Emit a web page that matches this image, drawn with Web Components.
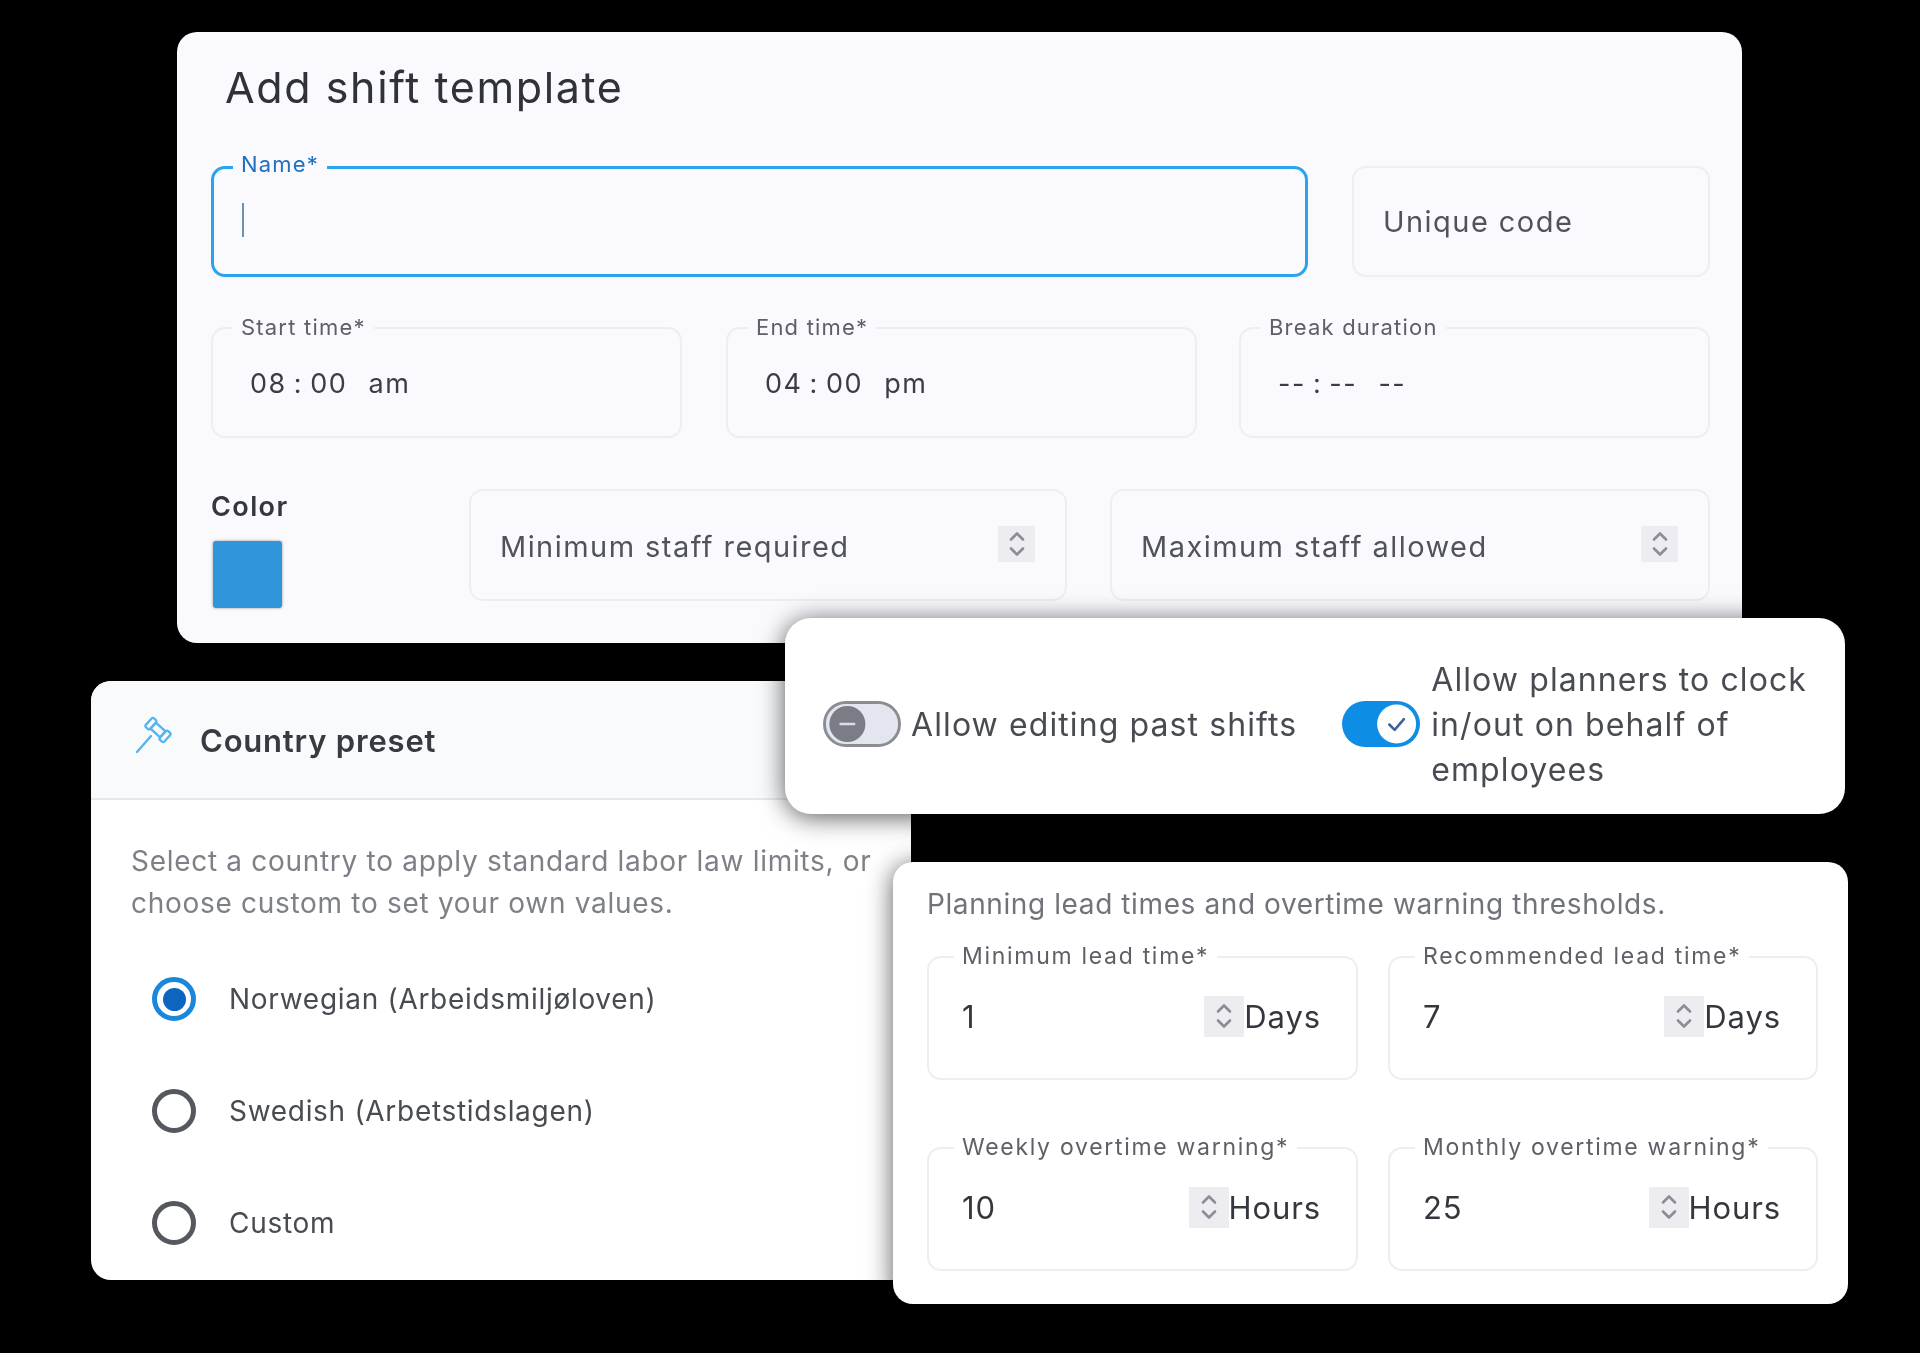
<!DOCTYPE html>
<html lang="en">
<head>
<meta charset="utf-8">
<title>Shift template settings</title>
<style>
  html, body { margin: 0; background: #000; }
  body { position: relative; width: 1920px; height: 1353px; overflow: hidden; font-family: Inter, "Liberation Sans", sans-serif; }
  /* the cards overlap like windows, so these are placed on the canvas */
  x-panel { position: absolute; filter: blur(.45px); }
  .shift { left: 177px; top: 32px; width: 1565px; height: 611px; --panel-bg: #fafafe; }
  .country { left: 91px; top: 681px; width: 820px; height: 599px; }
  .toggles { left: 785px; top: 618px; width: 1060px; height: 196px; --radius: 26px; }
  .lead { left: 893px; top: 862px; width: 955px; height: 442px; }
</style>
</head>
<body>
<template id="panel-tpl">
  <style>
    :host { display: block; background: var(--panel-bg, #fff); border-radius: var(--radius, 20px); box-sizing: border-box; overflow: hidden; }
    :host([shadow]) { box-shadow: 0 3px 26px rgba(0,0,0,.65); }
  </style>
  <slot></slot>
</template>

<template id="field-tpl">
  <style>
    :host { display: block; position: relative; box-sizing: border-box; height: var(--field-h, 111px); border: 2px solid #eceef2; border-radius: 14px;
      color: #50535a; font-size: var(--value-size, 29px); letter-spacing: var(--value-track, 1.45px); word-spacing: var(--value-words, 0); }
    :host([focused]) { border: 3px solid #2ba4ee; }
    .label { position: absolute; left: var(--label-x, 20px); top: -14px; padding: 0 8px; background: var(--panel-bg, #fff); line-height: 24px;
      font-size: var(--label-size, 22px); letter-spacing: var(--label-track, 1.2px); word-spacing: 0; color: #5d6067; white-space: nowrap; }
    :host([focused]) .label { color: #2170bf; top: -17px; left: 19px; }
    .label:empty { display: none; }
    .row { display: flex; align-items: center; height: 100%; box-sizing: border-box; padding: var(--field-pad, 0 29px 0 29px); }
    .value { flex: 1; white-space: pre; }
    .suffix:empty { display: none; }
    .caret { display: none; width: 2px; height: 34px; background: #6f8fb5; margin-top: -3px; }
    :host([focused]) .caret { display: block; }
  </style>
  <span class="label"></span>
  <div class="row">
    <i class="caret"></i>
    <span class="value"><slot></slot></span>
    <x-stepper></x-stepper>
    <span class="suffix"></span>
  </div>
</template>

<template id="stepper-tpl">
  <style>
    :host { display: flex; align-items: center; justify-content: center; width: var(--step-w, 37px); height: var(--step-h, 36px); margin-top: var(--step-y, -4px); background: #ececf1; flex: none; }
    svg { width: 18px; height: 28px; fill: none; stroke: #8d8e95; stroke-width: 2.6; stroke-linecap: round; stroke-linejoin: round; }
  </style>
  <svg viewBox="0 0 18 28"><path d="M3 9.5 9 3.5l6 6"/><path d="M3 18.5l6 6 6-6"/></svg>
</template>

<template id="toggle-tpl">
  <style>
    :host { display: block; box-sizing: border-box; width: 78px; height: 46px; flex: none; }
    svg { display: block; width: 100%; height: 100%; }
  </style>
  <svg viewBox="0 0 80 47"></svg>
</template>

<template id="radio-tpl">
  <style>
    :host { display: flex; align-items: center; gap: 33px; height: 44px; font-size: 28px; letter-spacing: .7px; color: #484b52; }
    .dot { box-sizing: border-box; width: 44px; height: 44px; border-radius: 50%; border: 5px solid #55585e; flex: none; display: flex; align-items: center; justify-content: center; }
    :host([checked]) .dot { border-color: #1a86dc; }
    :host([checked]) .dot::after { content: ""; width: 23px; height: 23px; border-radius: 50%; background: #0d65c0; }
  </style>
  <span class="dot"></span>
  <slot></slot>
</template>

<template id="shift-tpl">
  <style>
    :host { display: block; padding: 31px 32px 0 34px; }
    h1 { margin: 0 0 55px 14px; font-size: 43px; line-height: 48px; font-weight: 400; letter-spacing: 1.6px; color: #2f3238; }
    .top { display: grid; grid-template-columns: 1097px 358px; gap: 44px; margin-bottom: 50px; }
    .times { display: grid; grid-template-columns: 515px 513px 1fr; margin-bottom: 51px; }
    .time { width: 471px; --value-size: 27px; --value-track: 1.5px; --value-words: -2px; --field-pad: 2px 31px 0 37px; color: #3a3d43; }
    .staff { display: grid; grid-template-columns: 215px 598px 600px; gap: 43px; --field-h: 112px; --field-pad: 2px 30px 0 29px; }
    .color b { display: block; font-size: 27px; line-height: 32px; font-weight: 600; color: #34373d; margin-top: 2px; letter-spacing: 1.4px; }
    .color i { display: block; width: 69px; height: 67px; margin: 18px 0 0 2px; background: #2f96dc; border-radius: 3px; box-shadow: 0 0 3px rgba(0,0,0,.4); }
    .focus-name { --field-pad: 0 31px 0 28px; }
  </style>
  <h1>Add shift template</h1>
  <div class="top">
    <x-field label="Name*" focused class="focus-name"></x-field>
    <x-field>Unique code</x-field>
  </div>
  <div class="times">
    <x-field class="time" label="Start time*">08 : 00   am</x-field>
    <x-field class="time" label="End time*">04 : 00   pm</x-field>
    <x-field class="time" label="Break duration">-- : --   --</x-field>
  </div>
  <div class="staff">
    <div class="color"><b>Color</b><i></i></div>
    <x-field stepper>Minimum staff required</x-field>
    <x-field stepper>Maximum staff allowed</x-field>
  </div>
</template>

<template id="country-tpl">
  <style>
    :host { display: block; }
    header { display: flex; align-items: center; gap: 25px; height: 119px; box-sizing: border-box; padding: 0 0 0 44px; background: #f9fafc; border-bottom: 2px solid #e7e8ec; }
    header svg { width: 40px; height: 40px; flex: none; margin-top: -8px; fill: none; stroke: #55b3f0; stroke-width: 2.3; stroke-linecap: round; stroke-linejoin: round; }
    h2 { margin: 2px 0 0; font-size: 31px; font-weight: 600; letter-spacing: .8px; color: #363a41; }
    p { margin: 41px 0 0 40px; width: 770px; font-size: 28px; line-height: 41.5px; letter-spacing: .7px; color: #7d8087; }
    .options { display: flex; flex-direction: column; gap: 68px; padding: 53px 0 0 61px; }
  </style>
  <header>
    <svg viewBox="0 0 40 40"><g transform="rotate(42 23 14)"><rect x="10.5" y="8" width="6" height="12" rx="2"/><rect x="16.5" y="10" width="13" height="8"/><rect x="29.5" y="8" width="6" height="12" rx="2"/></g><path d="M16 20 2 36"/></svg>
    <h2>Country preset</h2>
  </header>
  <p>Select a country to apply standard labor law limits, or choose custom to set your own values.</p>
  <div class="options">
    <x-radio checked>Norwegian (Arbeidsmiljøloven)</x-radio>
    <x-radio>Swedish (Arbetstidslagen)</x-radio>
    <x-radio>Custom</x-radio>
  </div>
</template>

<template id="toggles-tpl">
  <style>
    :host { display: flex; align-items: center; height: 100%; padding: 16px 0 0 38px; font-size: 32px; letter-spacing: 1.1px; color: #484b52; box-sizing: border-box; }
    .item { display: flex; align-items: center; gap: 10px; }
    .item:first-child { margin-top: 3px; }
    .item + .item { margin-left: 45px; gap: 11px; }
    .wrap { width: 400px; line-height: 45px; }
  </style>
  <div class="item"><x-toggle></x-toggle><span>Allow editing past shifts</span></div>
  <div class="item"><x-toggle on></x-toggle><span class="wrap">Allow planners to clock in/out on behalf of employees</span></div>
</template>

<template id="lead-tpl">
  <style>
    :host { display: block; padding: 24px 30px 0 34px; }
    p { margin: 0 0 34px; font-size: 28px; line-height: 36px; letter-spacing: .6px; color: #70737a; }
    .grid { display: grid; grid-template-columns: 431px 430px; justify-content: space-between; row-gap: 67px; }
    x-field { --field-h: 124px; --field-pad: 0 35px 4px 33px; --value-size: 31px; --value-track: .9px; --label-x: 25px; --label-size: 23px; --label-track: 1.7px; --step-w: 40px; --step-h: 41px; --step-y: 0; color: #34373d; }
  </style>
  <p>Planning lead times and overtime warning thresholds.</p>
  <div class="grid">
    <x-field label="Minimum lead time*" stepper suffix="Days">1</x-field>
    <x-field label="Recommended lead time*" stepper suffix="Days">7</x-field>
    <x-field label="Weekly overtime warning*" stepper suffix="Hours">10</x-field>
    <x-field label="Monthly overtime warning*" stepper suffix="Hours">25</x-field>
  </div>
</template>

<x-panel class="shift"><shift-form></shift-form></x-panel>
<x-panel class="country" shadow><country-preset></country-preset></x-panel>
<x-panel class="toggles" shadow><shift-toggles></shift-toggles></x-panel>
<x-panel class="lead" shadow><lead-times></lead-times></x-panel>

<script>
  // every element just clones its template into an open shadow root
  function simple(name, tplId) {
    customElements.define(name, class extends HTMLElement {
      constructor() {
        super();
        this.attachShadow({ mode: 'open' }).appendChild(document.getElementById(tplId).content.cloneNode(true));
      }
    });
  }

  class XField extends HTMLElement {
    constructor() {
      super();
      this.attachShadow({ mode: 'open' }).appendChild(document.getElementById('field-tpl').content.cloneNode(true));
    }
    connectedCallback() {
      const root = this.shadowRoot;
      root.querySelector('.label').textContent = this.getAttribute('label') || '';
      root.querySelector('.suffix').textContent = this.getAttribute('suffix') || '';
      if (!this.hasAttribute('stepper')) root.querySelector('x-stepper').remove();
    }
  }

  class XToggle extends HTMLElement {
    constructor() {
      super();
      this.attachShadow({ mode: 'open' }).appendChild(document.getElementById('toggle-tpl').content.cloneNode(true));
    }
    connectedCallback() {
      const svg = this.shadowRoot.querySelector('svg');
      if (this.hasAttribute('on')) {
        svg.innerHTML = `
          <rect x="0" y="0" width="80" height="47" rx="23.5" fill="#0e8de4"/>
          <circle cx="56" cy="23.5" r="20" fill="#fff"/>
          <path d="M48.5 24l5.5 5.5 9.5-11" fill="none" stroke="#3f6199" stroke-width="2.6" stroke-linecap="round" stroke-linejoin="round"/>`;
      } else {
        svg.innerHTML = `
          <rect x="1.5" y="1.5" width="77" height="44" rx="22" fill="#e4e6ef" stroke="#8b8d93" stroke-width="3"/>
          <circle cx="25" cy="23.5" r="18.5" fill="#7a7c86"/>
          <path d="M18 23.5h14" stroke="#dcdde3" stroke-width="2.6" stroke-linecap="round"/>`;
      }
    }
  }

  simple('x-panel', 'panel-tpl');
  simple('x-stepper', 'stepper-tpl');
  simple('x-radio', 'radio-tpl');
  customElements.define('x-field', XField);
  customElements.define('x-toggle', XToggle);
  simple('shift-form', 'shift-tpl');
  simple('country-preset', 'country-tpl');
  simple('shift-toggles', 'toggles-tpl');
  simple('lead-times', 'lead-tpl');
</script>
</body>
</html>
